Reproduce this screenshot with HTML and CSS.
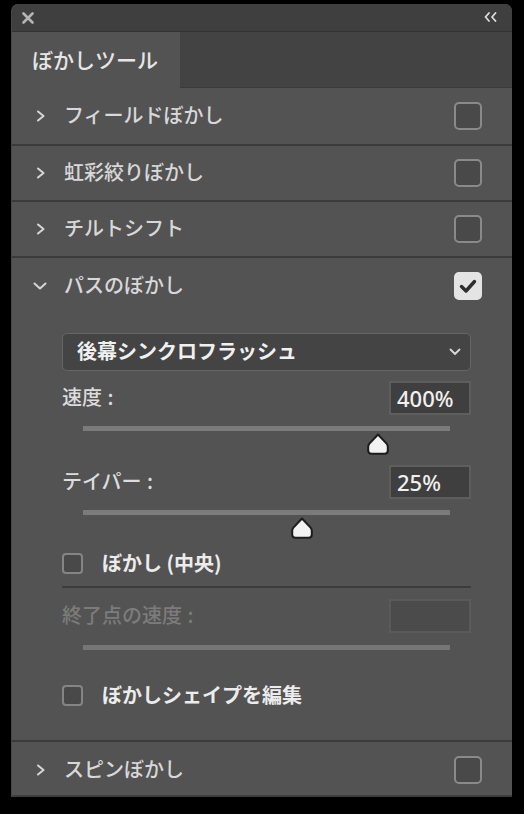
FILE: index.html
```html
<!DOCTYPE html>
<html lang="ja">
<head>
<meta charset="utf-8">
<title>ぼかしツール</title>
<link rel="stylesheet" href="styles.css">
</head>
<body>
<div class="panel">
  <div class="titlebar">
    <svg class="close" width="12" height="12" viewBox="0 0 12 12"><path d="M1.5 1.5 L10.5 10.5 M10.5 1.5 L1.5 10.5" stroke="#b4b4b4" stroke-width="2.6" stroke-linecap="round"/></svg>
    <svg class="collapse" width="13" height="10" viewBox="0 0 13 10"><path d="M5 1 L1.5 5 L5 9 M11.5 1 L8 5 L11.5 9" fill="none" stroke="#dcdcdc" stroke-width="1.8" stroke-linecap="round" stroke-linejoin="round"/></svg>
  </div>
  <div class="tabstrip">
    <div class="tab">ぼかしツール</div>
  </div>

  <div class="section">
    <div class="header first">
      <svg class="chev" width="10" height="12" viewBox="0 0 10 12"><path d="M2 1.5 L7.5 6 L2 10.5" fill="none" stroke="#d6d6d6" stroke-width="2" stroke-linecap="round" stroke-linejoin="round"/></svg>
      <span class="title">フィールドぼかし</span>
      <span class="cb"></span>
    </div>
  </div>
  <div class="section">
    <div class="header">
      <svg class="chev" width="10" height="12" viewBox="0 0 10 12"><path d="M2 1.5 L7.5 6 L2 10.5" fill="none" stroke="#d6d6d6" stroke-width="2" stroke-linecap="round" stroke-linejoin="round"/></svg>
      <span class="title">虹彩絞りぼかし</span>
      <span class="cb"></span>
    </div>
  </div>
  <div class="section">
    <div class="header">
      <svg class="chev" width="10" height="12" viewBox="0 0 10 12"><path d="M2 1.5 L7.5 6 L2 10.5" fill="none" stroke="#d6d6d6" stroke-width="2" stroke-linecap="round" stroke-linejoin="round"/></svg>
      <span class="title">チルトシフト</span>
      <span class="cb"></span>
    </div>
  </div>
  <div class="section">
    <div class="header open">
      <svg class="chev down" width="14" height="10" viewBox="0 0 14 10"><path d="M1.5 2.5 L7 7.5 L12.5 2.5" fill="none" stroke="#d6d6d6" stroke-width="2" stroke-linecap="round" stroke-linejoin="round"/></svg>
      <span class="title">パスのぼかし</span>
      <span class="cb checked"><svg width="28" height="28" viewBox="0 0 28 28"><path d="M7.5 14.5 L12 19 L20.5 9.5" fill="none" stroke="#2e2e2e" stroke-width="3.4" stroke-linecap="round" stroke-linejoin="round"/></svg></span>
    </div>
    <div class="body">
      <div class="dropdown">
        <span class="dd-text">後幕シンクロフラッシュ</span>
        <svg width="12" height="8" viewBox="0 0 12 8"><path d="M1.5 1.5 L6 6 L10.5 1.5" fill="none" stroke="#d8d8d8" stroke-width="1.8" stroke-linecap="round" stroke-linejoin="round"/></svg>
      </div>
      <div class="field">
        <span class="label">速度 :</span>
        <span class="num">400%</span>
      </div>
      <div class="slider">
        <div class="track"></div>
        <svg class="thumb" style="left: 80.4%" width="22" height="22" viewBox="0 0 22 22"><path d="M11 1.5 L19.6 10.6 Q20.8 12 20.8 14 L20.8 17.5 Q20.8 20.8 17.5 20.8 L4.5 20.8 Q1.2 20.8 1.2 17.5 L1.2 14 Q1.2 12 2.4 10.6 Z" fill="#f2f2f2" stroke="#1c1c1c" stroke-width="2" stroke-linejoin="round"/></svg>
      </div>
      <div class="field second">
        <span class="label">テイパー :</span>
        <span class="num">25%</span>
      </div>
      <div class="slider">
        <div class="track"></div>
        <svg class="thumb" style="left: 59.8%" width="22" height="22" viewBox="0 0 22 22"><path d="M11 1.5 L19.6 10.6 Q20.8 12 20.8 14 L20.8 17.5 Q20.8 20.8 17.5 20.8 L4.5 20.8 Q1.2 20.8 1.2 17.5 L1.2 14 Q1.2 12 2.4 10.6 Z" fill="#f2f2f2" stroke="#1c1c1c" stroke-width="2" stroke-linejoin="round"/></svg>
      </div>
      <div class="check-row center">
        <span class="cb small"></span>
        <span class="check-label">ぼかし (中央)</span>
      </div>
      <div class="field disabled">
        <span class="label">終了点の速度 :</span>
        <span class="num"></span>
      </div>
      <div class="track lone"></div>
      <div class="check-row shape">
        <span class="cb small"></span>
        <span class="check-label">ぼかしシェイプを編集</span>
      </div>
    </div>
  </div>
  <div class="section last">
    <div class="header spin">
      <svg class="chev" width="10" height="12" viewBox="0 0 10 12"><path d="M2 1.5 L7.5 6 L2 10.5" fill="none" stroke="#d6d6d6" stroke-width="2" stroke-linecap="round" stroke-linejoin="round"/></svg>
      <span class="title">スピンぼかし</span>
      <span class="cb"></span>
    </div>
  </div>
</div>
</body>
</html>
```

FILE: styles.css
```css
* { box-sizing: border-box; }
html, body {
  margin: 0;
  padding: 0;
  background: #000;
}
body {
  font-family: "Noto Sans CJK JP", "Noto Sans", sans-serif;
  color: #d8d8d8;
}
.panel {
  margin: 4px 0 0 11px;
  width: 501px;
  height: 793px;
  background: #535353;
  border-radius: 7px 7px 0 0;
  overflow: hidden;
  border-left: 1px solid #474747;
  border-bottom: 2px solid #3f3f3f;
}
.titlebar {
  height: 28px;
  background: #3f3f3f;
  border-bottom: 1px solid #323232;
  display: flex;
  align-items: center;
  justify-content: space-between;
  padding: 0 15px 0 10px;
}
.titlebar .close { margin-top: 1px; }
.titlebar .collapse { margin-top: -2px; }
.tabstrip {
  height: 56px;
  background: #434343;
  display: flex;
  border-bottom: 1px solid #3a3a3a;
}
.tab {
  width: 168px;
  background: #535353;
  color: #e6e6e6;
  font-size: 21px;
  font-weight: 500;
  line-height: 1;
  display: flex;
  align-items: center;
  padding-left: 20px;
  padding-bottom: 2px;
  height: 57px;
}
.section {
  border-bottom: 2px solid #3b3b3b;
}
.section.last { border-bottom: none; }
.header {
  height: 54px;
  display: flex;
  align-items: center;
  padding: 0 30px 0 24px;
}
.header.first { height: 56px; }
.header.open { height: 56px; }
.header.spin { height: 56px; }
.chev {
  flex: none;
  margin-right: 18px;
}
.chev.down {
  margin-left: -3px;
  margin-right: 17px;
}
.title {
  flex: 1;
  font-size: 20px;
  font-weight: 500;
  line-height: 1;
  color: #d8d8d8;
  padding-bottom: 2px;
}
.cb {
  flex: none;
  width: 28px;
  height: 28px;
  border: 2px solid #8a8a8a;
  border-radius: 5px;
  background: #494949;
  display: flex;
}
.cb.checked {
  background: #e4e4e4;
  border-color: #e4e4e4;
  align-items: center;
  justify-content: center;
}
.cb.checked svg { margin: -2px; }
.cb.small {
  width: 21px;
  height: 21px;
  border-radius: 4px;
  border-color: #858585;
}
.body {
  padding: 19px 41px 34px 50px;
}
.dropdown {
  height: 38px;
  background: #444444;
  border: 1.5px solid #666666;
  border-radius: 5px;
  display: flex;
  align-items: center;
  justify-content: space-between;
  padding: 0 9px 0 14px;
}
.dd-text {
  font-size: 20px;
  font-weight: bold;
  color: #f0f0f0;
  line-height: 1;
  padding-bottom: 2px;
}
.field {
  margin-top: 10px;
  height: 34px;
  display: flex;
  align-items: center;
  justify-content: space-between;
}
.label {
  font-size: 20px;
  font-weight: 500;
  line-height: 1;
  color: #dcdcdc;
  padding-bottom: 2px;
  word-spacing: 1px;
}
.num {
  width: 82px;
  height: 34px;
  background: #3f3f3f;
  border: 2px solid #5e5e5e;
  font-family: "Noto Sans", sans-serif;
  font-size: 22px;
  font-weight: 500;
  color: #f0f0f0;
  display: flex;
  align-items: center;
  padding-left: 6px;
  padding-bottom: 1px;
}
.field.disabled { margin-top: 11px; }
.field.disabled .label { color: #7c7c7c; }
.field.disabled .num {
  background: #4b4b4b;
  border-color: #5a5a5a;
}
.slider {
  position: relative;
  margin: 11px 21px 0 21px;
  height: 29px;
}
.track {
  height: 5px;
  background: #7b7b7b;
}
.track.lone {
  margin: 12px 21px 0 21px;
  background: #767676;
}
.thumb {
  position: absolute;
  top: 7px;
  margin-left: -11px;
}
.check-row {
  display: flex;
  align-items: center;
  height: 21px;
}
.check-row.center {
  margin-top: 14px;
  padding-bottom: 12px;
  border-bottom: 2px solid #3c3c3c;
  box-sizing: content-box;
  height: 21px;
}
.check-row.shape {
  margin-top: 35px;
}
.check-label {
  margin-left: 19px;
  font-size: 20px;
  font-weight: bold;
  color: #ececec;
  line-height: 1;
  padding-bottom: 2px;
}
```
